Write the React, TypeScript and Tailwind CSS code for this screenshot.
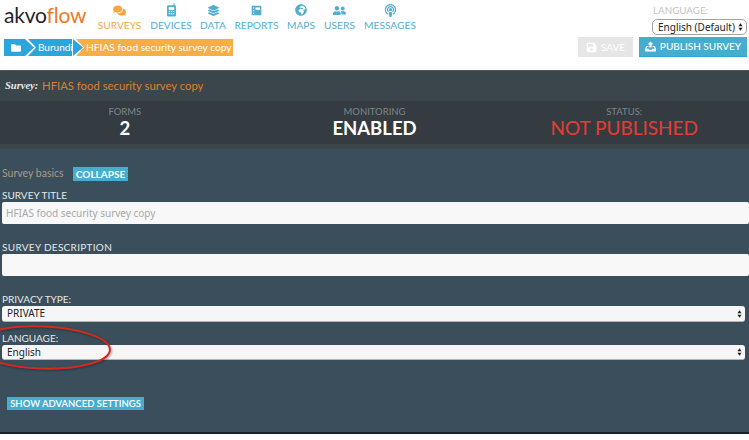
import { FaComments, FaLayerGroup, FaGlobeAfrica, FaUserFriends, FaPodcast, FaFolder, FaSave } from "react-icons/fa";
import type { ReactNode } from "react";

const raleway = "font-['Lato','Liberation_Sans',sans-serif]";

function PhoneIcon() {
  return (
    <svg width="11" height="14" viewBox="0 0 16 20" fill="currentColor">
      <rect x="11" y="0" width="1.500" height="4" />
      <path fillRule="evenodd" d="M3 3h10a1.500 1.500 0 0 1 1.500 1.500v13.500a1.500 1.500 0 0 1-1.500 1.500H3A1.500 1.500 0 0 1 1.500 18V4.500A1.500 1.500 0 0 1 3 3zM4 5.500v4.500h8V5.500zM4 11.500v1.500h2v-1.500zM7 11.500v1.500h2v-1.500zM10 11.500v1.500h2v-1.500zM4 14.500v1.500h2v-1.500zM7 14.500v1.500h2v-1.500zM10 14.500v1.500h2v-1.500z" />
    </svg>
  );
}

function ReportIcon() {
  return (
    <svg width="11" height="11" viewBox="0 0 17 17" fill="currentColor">
      <path fillRule="evenodd" d="M2 1h13a1 1 0 0 1 1 1v13a1 1 0 0 1-1 1H2a1 1 0 0 1-1-1V2a1 1 0 0 1 1-1zM3 4v1.500h2V4zM3 8v1.500h2V8zM3 12v1.500h2V12zM7 4v3.500h7V4z" />
    </svg>
  );
}

function PublishIcon() {
  return (
    <svg width="11" height="11" viewBox="0 0 12 12" fill="currentColor">
      <path d="M6 0.500 9 3.500H7.200V7H4.800V3.500H3z" />
      <path d="M1.500 5.500H3.800V6.500H2.400L1.300 8.500H3.800L4.500 9.500H7.500L8.200 8.500H10.700L9.600 6.500H8.200V5.500H10.500L12 8.500V11.500H0V8.500z" />
    </svg>
  );
}

function NavItem({ icon, label, active, w }: { icon: ReactNode; label: string; active?: boolean; w: string }) {
  return (
    <div className={`flex flex-col items-center ${w} ${active ? "text-[#f5a742]" : "text-[#52aecf]"}`}>
      <div className="h-[16px] flex items-center justify-center">{icon}</div>
      <span className="text-[10.200px] leading-[14px] whitespace-nowrap">{label}</span>
    </div>
  );
}

function Arrows() {
  return (
    <svg className="absolute right-[3px] top-1/2 -translate-y-1/2" width="5" height="9" viewBox="0 0 6 10" fill="#222">
      <path d="M3 0.500 5.500 4H0.500zM3 9.500 0.500 6h5z" />
    </svg>
  );
}

function Stat({ label, value, valueClass }: { label: string; value: string; valueClass: string }) {
  return (
    <div className="flex-1 flex flex-col items-center">
      <span className="text-[9.500px] leading-[12px] text-[#7d8589]">{label}</span>
      <span className={`leading-[20px] ${valueClass}`}>{value}</span>
    </div>
  );
}

function FieldSelect({ value, h }: { value: string; h: string }) {
  return (
    <div className={`relative ml-[2px] mr-[4px] ${h} bg-[#f6f6f6] rounded-[3px] border-b border-[#b5b5b5] flex items-center pl-[5px] font-['Noto_Sans',sans-serif] text-[10px] text-[#222]`}>
      {value}
      <Arrows />
    </div>
  );
}

const fieldLabel = "h-[12px] pl-[2px] text-[10px] leading-[12px] text-[#e4e8ea] whitespace-nowrap";

export default function App() {
  return (
    <div className={`w-[749px] h-[440px] overflow-hidden bg-white relative ${raleway}`}>
      <header className="h-[70px] relative flex">
        <div className="w-[98px] shrink-0 pl-[4px] pt-[2px]">
          <div className="text-[21px] leading-[26px] tracking-[-0.2px] text-[#1f1f2b]">
            akvo<span className="text-[#ea7a24]">flow</span>
          </div>
          <div className="mt-[11px] flex h-[17px] w-[240px] text-white">
            <div className="w-[30px] -mr-[3px] bg-[#2ba6dc] flex items-center pl-[7px] [clip-path:polygon(0_0,21px_0,30px_50%,21px_100%,0_100%)]">
              <FaFolder size={10} />
            </div>
            <div className="w-[44px] -ml-[3px] bg-[#2ba6dc] text-[10px] leading-[17px] pl-[10px] [clip-path:polygon(0_0,100%_0,100%_100%,0_100%,8px_50%)] whitespace-nowrap">
              Burundi
            </div>
            <div className="w-[10px] ml-[1px] bg-[#2ba6dc] [clip-path:polygon(0_0,100%_50%,0_100%)]" />
            <div className="w-[157px] -ml-[7px] bg-[#f7ae43] text-[10.200px] leading-[17px] pl-[10px] whitespace-nowrap [clip-path:polygon(0_0,100%_0,100%_100%,0_100%,8px_50%)]">
              HFIAS food security survey copy
            </div>
          </div>
        </div>
        <nav className="flex items-start pt-[2px] gap-[10px] h-[36px]">
          <NavItem w="w-[43px]" active label="SURVEYS" icon={<FaComments size={13} />} />
          <NavItem w="w-[40px]" label="DEVICES" icon={<PhoneIcon />} />
          <NavItem w="w-[24px]" label="DATA" icon={<FaLayerGroup size={11} />} />
          <NavItem w="w-[43px]" label="REPORTS" icon={<ReportIcon />} />
          <NavItem w="w-[26px]" label="MAPS" icon={<FaGlobeAfrica size={12} />} />
          <NavItem w="w-[31px]" label="USERS" icon={<FaUserFriends size={13} />} />
          <NavItem w="w-[50px]" label="MESSAGES" icon={<FaPodcast size={13} />} />
        </nav>
        <div className="ml-auto pr-[2px] pt-[4px] flex flex-col items-end">
          <div className="w-[94px] text-[9.800px] leading-[13px] text-[#c4c4c4]">LANGUAGE:</div>
          <div className="relative w-[95px] h-[16px] mt-[2px] rounded-[5px] border border-[#a2a2a2] bg-white font-['Noto_Sans',sans-serif] text-[10px] leading-[14px] pl-[5px] text-[#222] whitespace-nowrap">
            English (Default)
            <Arrows />
          </div>
          <div className="mt-[2px] flex gap-[6px] text-[10px] text-white">
            <div className="w-[55px] h-[20px] bg-[#e6e6e6] flex items-center justify-center gap-[4px]">
              <FaSave size={11} /> SAVE
            </div>
            <div className="w-[108px] h-[20px] bg-[#46add0] border-b border-[#2ba6dc] flex items-center justify-center gap-[4px] whitespace-nowrap font-medium">
              <PublishIcon /> PUBLISH SURVEY
            </div>
          </div>
        </div>
      </header>

      <main className="h-[364px] bg-[#3a4f5b] border-b-2 border-[#1b2227] flex flex-col">
        <div className="h-[31px] bg-[#3a464b] border-t border-[#4d5659] flex items-center pl-[5px]">
          <span className="font-['Liberation_Serif',serif] italic font-bold text-[10.500px] text-[#e8e8e8] w-[37px]">Survey:</span>
          <span className="text-[11.300px] text-[#d9812c] whitespace-nowrap">HFIAS food security survey copy</span>
        </div>
        <div className="h-[43px] bg-[#343c42] flex items-center pb-[1px]">
          <Stat label="FORMS" value="2" valueClass="text-[18.500px] text-white font-bold" />
          <Stat label="MONITORING" value="ENABLED" valueClass="text-[18.500px] text-white font-bold" />
          <Stat label="STATUS:" value="NOT PUBLISHED" valueClass="text-[19px] text-[#e63c32]" />
        </div>
        <div className="h-[5px] bg-[#3a4648]" />
        <div className="flex items-center h-[14px] mt-[18px] pl-[2px]">
          <span className="text-[10.500px] text-[#aa9b80] w-[71px]">Survey basics</span>
          <span className="h-[14px] w-[55px] bg-[#46add0] text-white text-[10px] font-bold leading-[14px] text-center">COLLAPSE</span>
        </div>
        <div className={`mt-[8px] ${fieldLabel}`}>SURVEY TITLE</div>
        <div className="mt-[1px] ml-[2px] h-[22px] bg-[#f8f8f8] rounded-[2px] flex items-center pl-[4px] font-['Noto_Sans',sans-serif] text-[10px] text-[#a9a9a9]">
          HFIAS food security survey copy
        </div>
        <div className={`mt-[17px] ${fieldLabel} tracking-[0.3px]`}>SURVEY DESCRIPTION</div>
        <div className="mt-[1px] ml-[2px] h-[22px] bg-[#f8f8f8] rounded-[2px]" />
        <div className={`mt-[17px] ${fieldLabel}`}>PRIVACY TYPE:</div>
        <div className="mt-[1px]"><FieldSelect value="PRIVATE" h="h-[16px]" /></div>
        <div className={`mt-[10px] ${fieldLabel}`}>LANGUAGE:</div>
        <div className="mt-[1px]"><FieldSelect value="English" h="h-[15px]" /></div>
        <div className="mt-[37px] ml-[7px] w-[137px] h-[13px] bg-[#46add0] text-white text-[9.500px] leading-[13px] text-center whitespace-nowrap font-semibold">
          SHOW ADVANCED SETTINGS
        </div>
      </main>

      <svg className="absolute left-0 top-[320px] pointer-events-none drop-shadow-[1px_1px_1px_rgba(0,0,0,0.35)]" width="120" height="54" viewBox="0 0 120 54" fill="none">
        <ellipse cx="42" cy="27.500" rx="68" ry="21" transform="rotate(2 42 27.500)" stroke="#d42a20" strokeWidth="2" />
      </svg>
    </div>
  );
}
